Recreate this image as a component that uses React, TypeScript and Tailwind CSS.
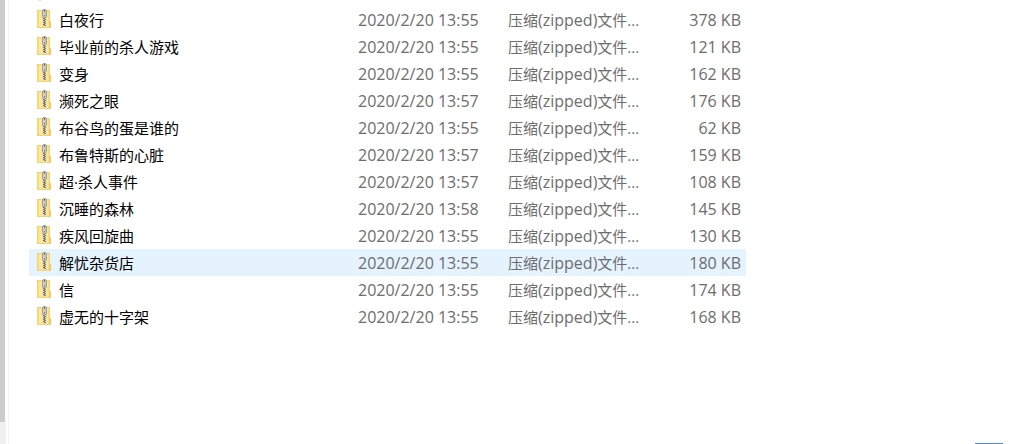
const files = [
  { name: "白夜行", date: "2020/2/20 13:55", size: "378 KB" },
  { name: "毕业前的杀人游戏", date: "2020/2/20 13:55", size: "121 KB" },
  { name: "变身", date: "2020/2/20 13:55", size: "162 KB" },
  { name: "濒死之眼", date: "2020/2/20 13:57", size: "176 KB" },
  { name: "布谷鸟的蛋是谁的", date: "2020/2/20 13:55", size: "62 KB" },
  { name: "布鲁特斯的心脏", date: "2020/2/20 13:57", size: "159 KB" },
  { name: "超·杀人事件", date: "2020/2/20 13:57", size: "108 KB" },
  { name: "沉睡的森林", date: "2020/2/20 13:58", size: "145 KB" },
  { name: "疾风回旋曲", date: "2020/2/20 13:55", size: "130 KB" },
  { name: "解忧杂货店", date: "2020/2/20 13:55", size: "180 KB", selected: true },
  { name: "信", date: "2020/2/20 13:55", size: "174 KB" },
  { name: "虚无的十字架", date: "2020/2/20 13:55", size: "168 KB" },
];

const teeth = [9, 11, 13, 15];

function ZipIcon() {
  return (
    <svg width="14" height="21" viewBox="0 0 14 21" className="shrink-0" aria-hidden="true">
      <path d="M11.5 12.5h2v6h-2z" fill="#fbdc7c" stroke="#e8bd4a" strokeWidth=".8" />
      <rect x=".5" y="1.5" width="12" height="17" fill="#ffe79a" stroke="#efcb62" strokeWidth=".8" />
      <path d="M1.5 2v16M11.5 2v16" stroke="#fbdc80" />
      <rect x="5" y="8" width="5" height="10" fill="#efe0a8" />
      {teeth.map((y) => (
        <g key={y}>
          <rect x="6" y={y} width="2" height="1" fill="#6d6d6d" />
          <rect x="7" y={y + 1} width="2" height="1" fill="#858585" />
        </g>
      ))}
      <path d="M6.4 .5h2.2l.9 1.2v6L8.6 9H6.4l-.9-1.3v-6z" fill="#c3c3bf" stroke="#91918b" strokeWidth=".8" />
      <path d="M7.5 1v1.500" stroke="#555" />
      <path d="M7 3.5V8" stroke="#dededa" />
      <path d="M7.5 6v1.5" stroke="#777" />
    </svg>
  );
}

function FolderIcon() {
  return (
    <svg width="14" height="19" viewBox="0 0 14 19" className="shrink-0" aria-hidden="true">
      <path d="M0 1h14v15H4v2H2v-2H0z" fill="#fbdc7c" />
    </svg>
  );
}

export default function App() {
  return (
    <div className="flex h-screen overflow-hidden bg-white font-['Open_Sans','Noto_Sans_CJK_SC',sans-serif] text-[15px] leading-5 text-[#6d6d6d]">
      <div className="flex w-[9px] shrink-0 flex-col border-r border-[#f3f3f3]">
        <div className="w-[5px] flex-1 bg-[#cdcdcd]" />
        <div className="h-[22px] w-[6px] bg-[#f0f0f0]" />
      </div>

      <main className="min-w-0 flex-1 pl-5">
        <table className="-mt-[21px] w-[717px] table-fixed border-collapse">
          <colgroup>
            <col className="w-[329px]" />
            <col className="w-[150px]" />
            <col className="w-[150px]" />
            <col />
          </colgroup>
          <tbody>
            <tr className="h-[27px]">
              <td className="p-0 pl-2"><FolderIcon /></td>
              <td className="p-0 text-base leading-5">2020/2/20</td>
              <td className="p-0" />
              <td className="p-0" />
            </tr>
            {files.map((file) => (
              <tr key={file.name} className={file.selected ? "h-[27px] bg-[#e5f3ff]" : "h-[27px] hover:bg-[#e5f3ff]"}>
                <td className="p-0 pl-2">
                  <div className="flex items-center gap-2">
                    <ZipIcon />
                    <span className="text-black">{file.name}</span>
                  </div>
                </td>
                <td className="p-0 text-base leading-5">{file.date}</td>
                <td className="whitespace-nowrap p-0">
                  压缩<span className="text-base leading-5">(zipped)</span>文件...
                </td>
                <td className="p-0 pr-[5px] text-right text-base leading-5">{file.size}</td>
              </tr>
            ))}
          </tbody>
        </table>
      </main>

      <div className="mr-[22px] h-px w-7 shrink-0 self-end bg-[#4a8ccb]" />
    </div>
  );
}
